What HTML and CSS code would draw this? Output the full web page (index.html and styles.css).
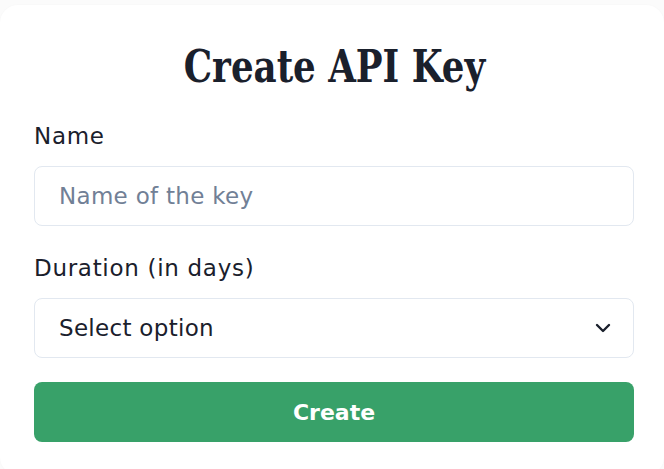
FILE: index.html
```html
<!DOCTYPE html>
<html>
<head>
<meta charset="utf-8">
<link rel="stylesheet" href="styles.css">
</head>
<body>
<div class="card">
  <div class="title-row"><h1 class="title">Create API Key</h1></div>
  <form class="form">
    <label class="label" for="name">Name</label>
    <input class="field" id="name" type="text" placeholder="Name of the key">
    <label class="label label-gap" for="dur">Duration (in days)</label>
    <div class="select">
      <span>Select option</span>
      <svg class="chev" width="16" height="12" viewBox="0 0 16 12"><path d="M2 3 L8 9 L14 3" fill="none" stroke="#1a202c" stroke-width="2.4" stroke-linecap="round" stroke-linejoin="round"/></svg>
    </div>
    <button class="btn" type="button">Create</button>
  </form>
</div>
</body>
</html>
```

FILE: styles.css
```css
html, body {
  margin: 0;
  padding: 0;
  background: #fbfbfb;
}
.card {
  margin-top: 5px;
  background: #ffffff;
  border-radius: 18px;
  box-shadow: 0 0 2px rgba(0,0,0,0.03);
  min-height: 470px;
  padding: 36px 30px 0 34px;
  box-sizing: border-box;
}
.title-row {
  width: 600px;
  display: flex;
  justify-content: center;
}
.title {
  margin: 0;
  font-family: "DejaVu Serif", serif;
  font-stretch: condensed;
  font-weight: 700;
  font-size: 44px;
  line-height: 52px;
  color: #1a202c;
  transform: scaleX(0.9);
  white-space: nowrap;
}
.form {
  width: 600px;
  display: flex;
  flex-direction: column;
  margin-top: 28px;
}
.label {
  font-family: "DejaVu Sans", sans-serif;
  font-size: 23px;
  letter-spacing: 0.7px;
  line-height: 30px;
  color: #1a202c;
  margin-bottom: 15px;
}
.label-gap {
  margin-top: 27px;
}
.field, .select {
  height: 60px;
  box-sizing: border-box;
  border: 1px solid #e2e8f0;
  border-radius: 8px;
  padding: 0 24px;
  font-family: "DejaVu Sans", sans-serif;
  font-size: 23px;
  letter-spacing: 0.3px;
  color: #1a202c;
  background: #fff;
  outline: none;
}
.field::placeholder {
  color: #718096;
}
.select {
  display: flex;
  align-items: center;
  justify-content: space-between;
  padding-right: 22px;
  letter-spacing: 0.3px;
}
.chev {
  display: block;
}
.btn {
  margin-top: 24px;
  height: 60px;
  border: none;
  border-radius: 8px;
  background: #38a169;
  color: #fff;
  font-family: "DejaVu Sans", sans-serif;
  font-weight: 700;
  font-size: 22px;
}
```
